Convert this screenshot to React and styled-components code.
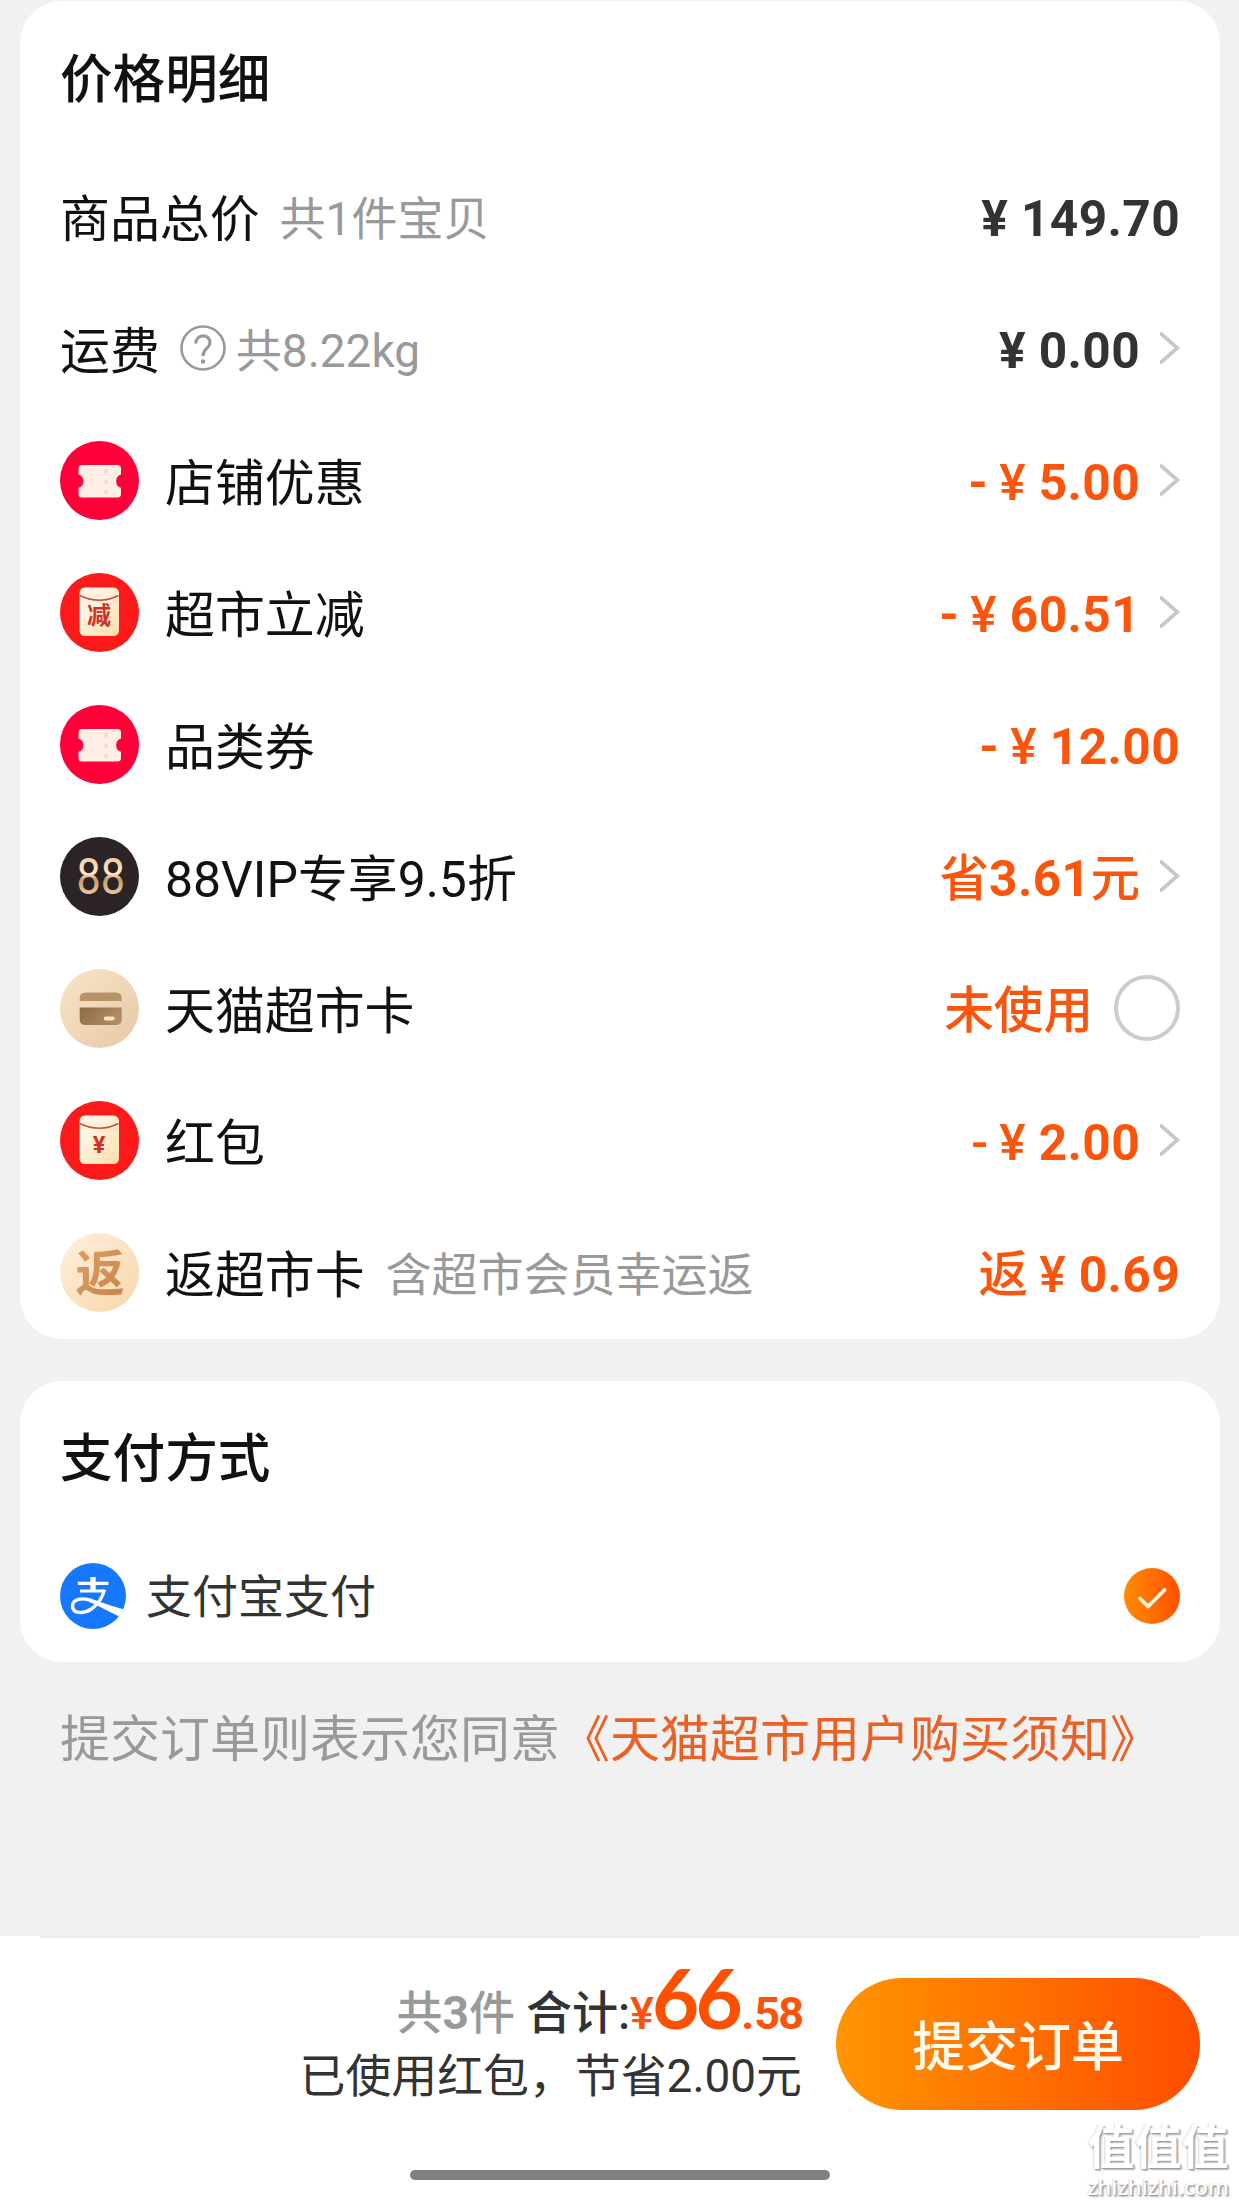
import React from "react";
import styled, { createGlobalStyle } from "styled-components";

const GlobalStyle = createGlobalStyle`
  * { box-sizing: border-box; }
  body {
    margin: 0;
    background: #f1f1f1;
    font-family: Roboto, "Noto Sans CJK SC", sans-serif;
    color: #111;
  }
`;

const Page = styled.div`
  width: 1239px;
  height: 2204px;
  overflow: hidden;
  display: flex;
  flex-direction: column;
  padding-top: 1px;
`;

const Card = styled.section`
  flex: none;
  margin: 0 19px ${(p) => p.$gap || 0}px 20px;
  height: ${(p) => p.$height}px;
  padding: 0 40px;
  border-radius: 42px;
  background: #fff;
`;

const CardTitle = styled.h2`
  margin: 0;
  height: ${(p) => p.$height}px;
  line-height: ${(p) => p.$line}px;
  font-size: 52.6px;
  font-weight: 500;
`;

const Row = styled.div`
  display: flex;
  align-items: center;
  height: 132px;
  white-space: nowrap;
`;

const Badge = styled.svg`
  flex: none;
  width: 79px;
  height: 79px;
  margin: 0 26px 5px 0;
`;

const Label = styled.span`
  padding-top: 2px;
  font-size: 49.9px;
  line-height: 60px;
`;

const Note = styled.span`
  margin-left: ${(p) => p.$gap}px;
  font-size: 46px;
  line-height: 60px;
  color: #999;
`;

const HelpIcon = styled.svg`
  width: 46px;
  height: 46px;
  margin: 0 0 6px 20px;
`;

const Amount = styled.span`
  margin-left: auto;
  font-size: 49.6px;
  line-height: 60px;
  font-weight: 700;
  letter-spacing: 0.4px;
  color: ${(p) => (p.$plain ? "#333" : "#fc540a")};
`;

const Medium = styled.span`
  font-weight: 500;
  letter-spacing: 0;
`;

const Yen = styled.span`
  display: inline-block;
  width: 50.5px;
  padding-right: 2px;
  text-align: center;
  font-weight: 500;
  letter-spacing: 0;
`;

const ChevronSvg = styled.svg`
  width: 20px;
  height: 34px;
  margin: 0 0 6px 20px;
`;

const Radio = styled.span`
  width: 66px;
  height: 66px;
  margin: 0 0 6px 21px;
  border: 4px solid #ccc;
  border-radius: 50%;
`;

const PayRow = styled.div`
  display: flex;
  align-items: center;
  height: 66px;
`;

const PayLogo = styled.svg`
  width: 66px;
  height: 66px;
  margin-right: 20px;
`;

const PayName = styled.span`
  padding-top: 1px;
  font-size: 46px;
  line-height: 60px;
  color: #333;
`;

const Checked = styled.svg`
  width: 56px;
  height: 56px;
  margin-left: auto;
`;

const Terms = styled.p`
  margin: 48px 0 0 60px;
  font-size: 50px;
  line-height: 60px;
  color: #999;
  white-space: nowrap;
`;

const TermsLink = styled.a`
  color: #ea6126;
`;

const Footer = styled.footer`
  position: relative;
  margin-top: auto;
  height: 268px;
  background: #fff;
`;

const Divider = styled.div`
  height: 2px;
  margin: 0 39px 0 40px;
  background: #ececec;
`;

const FooterMain = styled.div`
  display: flex;
  justify-content: flex-end;
  align-items: flex-start;
  padding: 30px 39px 0 0;
`;

const Summary = styled.div`
  display: flex;
  flex-direction: column;
  align-items: flex-end;
  margin-right: 34px;
  white-space: nowrap;
`;

const TotalLine = styled.div`
  display: flex;
  align-items: baseline;
  height: 78px;
  font-size: 46px;
  line-height: 60px;
  font-weight: 500;
  color: #333;
`;

const Count = styled.span`
  margin-right: 11px;
  color: #999;
`;

const CountNumber = styled.span`
  font-weight: 700;
`;

const Price = styled.span`
  font-family: Lato, sans-serif;
  font-weight: 700;
  font-size: 81.5px;
  letter-spacing: -3.6px;
  color: #ff5000;
`;

const Cents = styled.span`
  margin-left: ${(p) => p.$before}px;
  font-size: 45px;
  font-weight: 700;
  letter-spacing: -2px;
  color: #fc530a;
`;

const YenSign = styled.span`
  margin-right: 1px;
  font-size: 45px;
  letter-spacing: -3px;
  color: #fa540c;
`;

const Saved = styled.div`
  font-size: 45.9px;
  line-height: 60px;
  color: #333;
`;

const Submit = styled.button`
  width: 364px;
  height: 132px;
  margin-top: 10px;
  padding: 0 0 2px;
  border: 0;
  border-radius: 66px;
  background: linear-gradient(90deg, #ff9500, #ff4d00);
  color: #fff9ee;
  font-family: inherit;
  font-size: 53px;
  font-weight: 500;
`;

const HomeBar = styled.div`
  position: absolute;
  left: 410px;
  top: 234px;
  width: 420px;
  height: 10px;
  border-radius: 5px;
  background: #808080;
`;

const Watermark = styled.div`
  position: absolute;
  right: 9px;
  top: 185px;
  width: 144px;
  display: flex;
  flex-direction: column;
  align-items: center;
  color: #fff;
  text-shadow: 1px 1px 1px #999, 2px 2px 2px #bbb, -1px 0 1px #ddd;
`;

const MarkName = styled.span`
  font-size: 47px;
  line-height: 54px;
  font-weight: 700;
  white-space: nowrap;
`;

const MarkUrl = styled.span`
  font-family: "Noto Sans", sans-serif;
  font-size: 22px;
  line-height: 22px;
  font-weight: 500;
`;

const Chevron = () => (
  <ChevronSvg viewBox="0 0 20 34">
    <path d="M0 2 L17.5 17 L0 32" fill="none" stroke="#c8c8c8" strokeWidth="3.8" />
  </ChevronSvg>
);

const Help = () => (
  <HelpIcon viewBox="0 0 46 46" fill="none" stroke="#999">
    <circle cx="23" cy="23" r="21.5" strokeWidth="2.6" />
    <path d="M15.8 18.5 C15.8 8.5 30 8.5 30 17.5 C30 23.5 23 23 23 31" strokeWidth="3.2" />
    <circle cx="23" cy="36.5" r="2.2" fill="#999" stroke="none" />
  </HelpIcon>
);

const Coupon = () => (
  <Badge viewBox="0 0 79 79">
    <circle cx="39.5" cy="39.5" r="39.5" fill="#ff0038" />
    <path
      d="M22 24H57.5Q61 24 61 27.5V33.5A7 7 0 0 0 61 46.8V53Q61 56.5 57.5 56.5H22Q18.5 56.5 18.5 53V46.8A7 7 0 0 0 18.5 33.5V27.5Q18.5 24 22 24Z"
      fill="#feeee6"
    />
    <path d="M46 28V53" stroke="#f9d6d0" strokeWidth="3" strokeDasharray="4.5 6" />
  </Badge>
);

const Packet = ({ mark, size, y }) => (
  <Badge viewBox="0 0 79 79">
    <defs>
      <linearGradient id="packet" x1="0" y1="0" x2="1" y2="1">
        <stop offset="0.3" stopColor="#fff3e2" />
        <stop offset="1" stopColor="#ffdfa8" />
      </linearGradient>
    </defs>
    <circle cx="39.5" cy="39.5" r="39.5" fill="#fd1a1a" />
    <rect x="19.5" y="14.5" width="39.5" height="48.5" rx="5.5" fill="url(#packet)" />
    <path d="M20 22.5Q39.5 32 58.5 22.5" fill="none" stroke="#d0503c" strokeWidth="1.6" />
    <text x="39" y={y} textAnchor="middle" fontSize={size} fontWeight="700" fill="#d22f26">
      {mark}
    </text>
  </Badge>
);

const Vip = () => (
  <Badge viewBox="0 0 79 79">
    <defs>
      <linearGradient id="gold" x1="0" y1="0" x2="0" y2="1">
        <stop offset="0" stopColor="#e5b98a" />
        <stop offset="0.45" stopColor="#ffe9c8" />
        <stop offset="0.55" stopColor="#c99a70" />
        <stop offset="1" stopColor="#ffe6c0" />
      </linearGradient>
    </defs>
    <circle cx="39.5" cy="39.5" r="39.5" fill="#2b2325" />
    <text x="16.6" y="56.5" fontSize="49.5" textLength="48.5" lengthAdjust="spacingAndGlyphs" fill="url(#gold)">
      88
    </text>
  </Badge>
);

const MarketCard = () => (
  <Badge viewBox="0 0 79 79">
    <defs>
      <linearGradient id="sand" x1="0" y1="0" x2="1" y2="1">
        <stop offset="0" stopColor="#f9e5c8" />
        <stop offset="1" stopColor="#e6c8a6" />
      </linearGradient>
      <linearGradient id="bronze" x1="0" y1="0" x2="1" y2="0.3">
        <stop offset="0" stopColor="#8f6b45" />
        <stop offset="1" stopColor="#b08a60" />
      </linearGradient>
    </defs>
    <circle cx="39.5" cy="39.5" r="39.5" fill="url(#sand)" />
    <path d="M19.7 32V29.5Q19.7 23.5 25.7 23.5H55.7Q61.7 23.5 61.7 29.5V32Z" fill="#b79368" />
    <path d="M19.7 38.5H61.7V50Q61.7 56 55.7 56H25.7Q19.7 56 19.7 50Z" fill="url(#bronze)" />
    <rect x="43.7" y="47.5" width="11" height="4" rx="2" fill="#fde6c8" />
  </Badge>
);

const Rebate = () => (
  <Badge viewBox="0 0 79 79">
    <defs>
      <linearGradient id="cream" x1="0" y1="0" x2="1" y2="1">
        <stop offset="0" stopColor="#fff1db" />
        <stop offset="1" stopColor="#f7d5ab" />
      </linearGradient>
      <linearGradient id="copper" x1="0" y1="0" x2="1" y2="1">
        <stop offset="0" stopColor="#dda066" />
        <stop offset="1" stopColor="#c8824c" />
      </linearGradient>
    </defs>
    <circle cx="39.5" cy="39.5" r="39.5" fill="url(#cream)" />
    <text x="40" y="58" textAnchor="middle" fontSize="49" fontWeight="700" fill="url(#copper)">
      返
    </text>
  </Badge>
);

const Alipay = () => (
  <PayLogo viewBox="0 0 66 66">
    <clipPath id="disc">
      <circle cx="33" cy="33" r="33" />
    </clipPath>
    <circle cx="33" cy="33" r="33" fill="#1677ff" />
    <g fill="none" stroke="#fff" clipPath="url(#disc)">
      <path d="M17.8 20.4H48.4" strokeWidth="3.2" />
      <path d="M33 14V28" strokeWidth="5.4" />
      <path d="M20 28H44" strokeWidth="3" />
      <path d="M44.6 26.6C42.5 34 38 41.5 31.5 46C23 51.5 12.5 50.5 12.5 43C12.5 36 22 34 32 37.8" strokeWidth="3.4" />
      <path d="M30 35.3C40 39 52 43.5 67 47L62 55C52 50 40 43.5 30 39.2Z" fill="#fff" stroke="none" />
    </g>
  </PayLogo>
);

const Check = () => (
  <Checked viewBox="0 0 56 56">
    <defs>
      <linearGradient id="check" x1="0" y1="0" x2="1" y2="0">
        <stop offset="0" stopColor="#ff8c00" />
        <stop offset="1" stopColor="#ff5000" />
      </linearGradient>
    </defs>
    <circle cx="28" cy="28" r="28" fill="url(#check)" />
    <path d="M16 30.5L24 38.5L40.5 22" fill="none" stroke="#fff6e4" strokeWidth="3.8" strokeLinecap="round" strokeLinejoin="round" />
  </Checked>
);

export default function App() {
  return (
    <>
      <GlobalStyle />
      <Page>
        <Card $height={1338} $gap={42}>
          <CardTitle $height={152} $line={158.5}>价格明细</CardTitle>
          <Row>
            <Label>商品总价</Label>
            <Note $gap={20}>共1件宝贝</Note>
            <Amount $plain>¥ 149.70</Amount>
          </Row>
          <Row>
            <Label>运费</Label>
            <Help />
            <Note $gap={10}>共8.22kg</Note>
            <Amount $plain>¥ 0.00</Amount>
            <Chevron />
          </Row>
          <Row>
            <Coupon />
            <Label>店铺优惠</Label>
            <Amount>-<Yen>¥</Yen>5.00</Amount>
            <Chevron />
          </Row>
          <Row>
            <Packet mark="减" size={24} y={50.5} />
            <Label>超市立减</Label>
            <Amount>-<Yen>¥</Yen>60.51</Amount>
            <Chevron />
          </Row>
          <Row>
            <Coupon />
            <Label>品类券</Label>
            <Amount>-<Yen>¥</Yen>12.00</Amount>
          </Row>
          <Row>
            <Vip />
            <Label>88VIP专享9.5折</Label>
            <Amount><Medium>省</Medium>3.61<Medium>元</Medium></Amount>
            <Chevron />
          </Row>
          <Row>
            <MarketCard />
            <Label>天猫超市卡</Label>
            <Amount><Medium>未使用</Medium></Amount>
            <Radio />
          </Row>
          <Row>
            <Packet mark="¥" size={23.5} y={52} />
            <Label>红包</Label>
            <Amount><Medium>-</Medium><Yen>¥</Yen>2.00</Amount>
            <Chevron />
          </Row>
          <Row>
            <Rebate />
            <Label>返超市卡</Label>
            <Note $gap={21}>含超市会员幸运返</Note>
            <Amount><Medium>返</Medium><Yen>¥</Yen>0.69</Amount>
          </Row>
        </Card>

        <Card $height={281}>
          <CardTitle $height={182} $line={156.5}>支付方式</CardTitle>
          <PayRow>
            <Alipay />
            <PayName>支付宝支付</PayName>
            <Check />
          </PayRow>
        </Card>

        <Terms>
          提交订单则表示您同意<TermsLink>《天猫超市用户购买须知》</TermsLink>
        </Terms>

        <Footer>
          <Divider />
          <FooterMain>
            <Summary>
              <TotalLine>
                <Count>共<CountNumber>3</CountNumber>件</Count>
                合计:
                <YenSign>¥</YenSign>
                <Price>66</Price>
                <Cents $before={2}>.</Cents>
                <Cents $before={2}>58</Cents>
              </TotalLine>
              <Saved>已使用红包，节省2.00元</Saved>
            </Summary>
            <Submit>提交订单</Submit>
          </FooterMain>
          <HomeBar />
          <Watermark>
            <MarkName>值值值</MarkName>
            <MarkUrl>zhizhizhi.com</MarkUrl>
          </Watermark>
        </Footer>
      </Page>
    </>
  );
}
